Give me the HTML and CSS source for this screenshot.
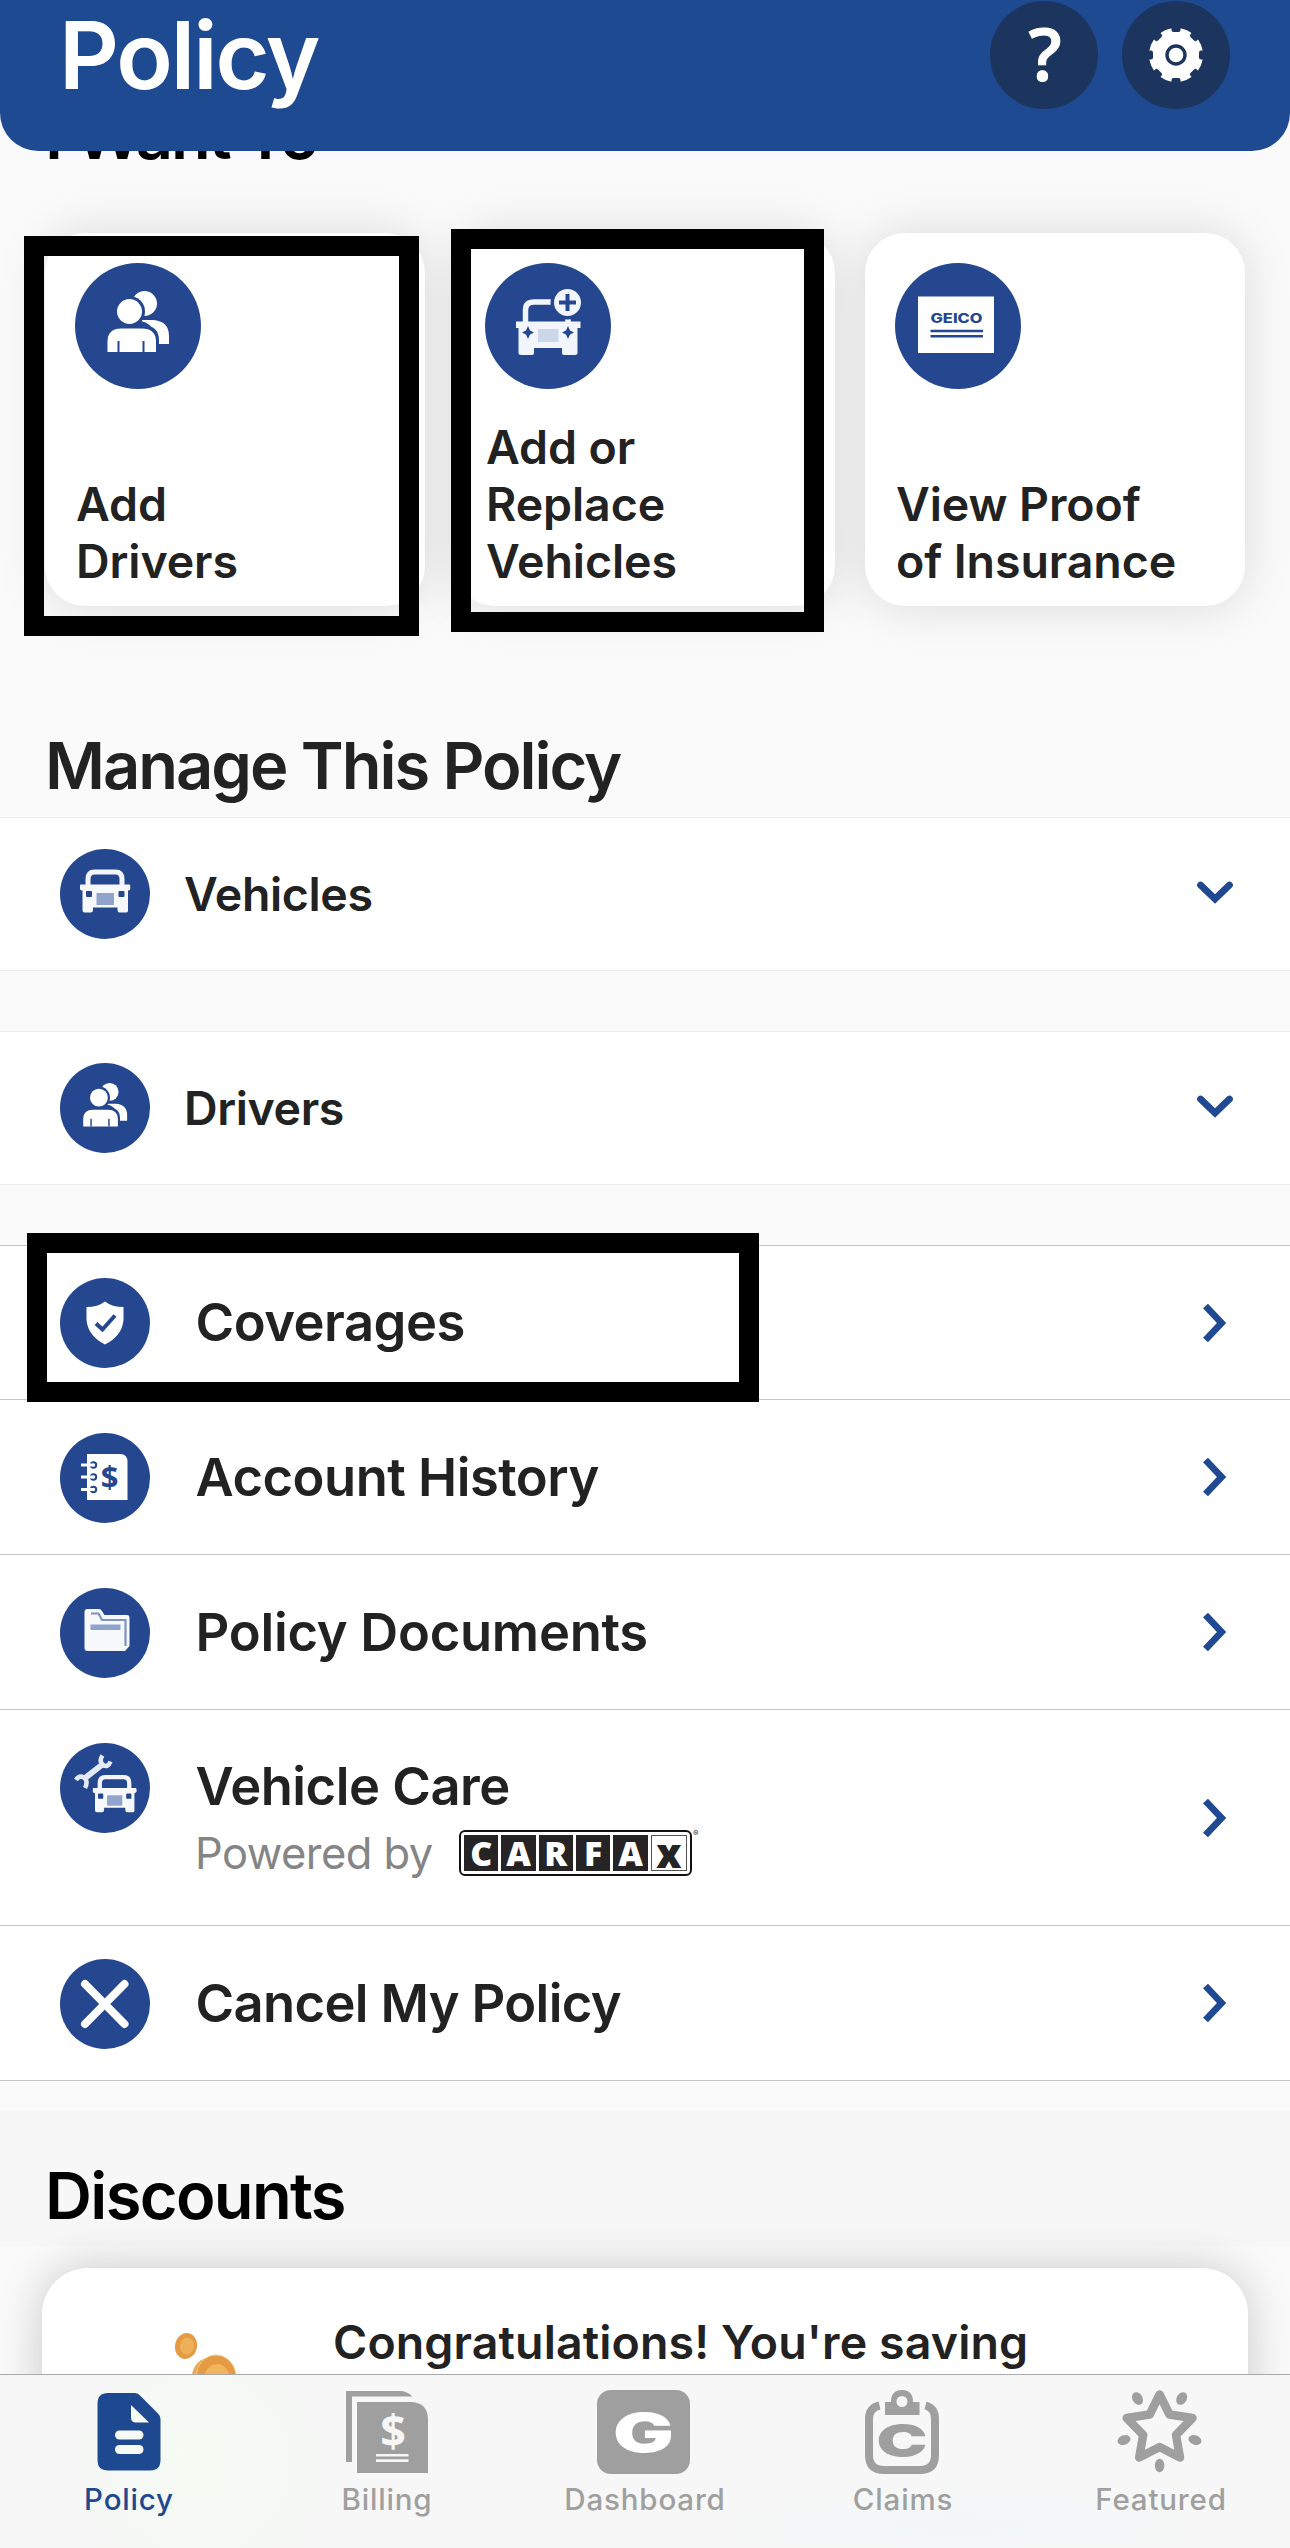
FILE: index.html
```html
<!DOCTYPE html>
<html lang="en">
<head>
<meta charset="utf-8">
<title>Policy</title>
<link rel="stylesheet" href="styles.css">
</head>
<body>
<svg class="defs" width="0" height="0" aria-hidden="true">
  <symbol id="people" viewBox="0 0 126 126">
    <circle cx="69.500" cy="40.500" r="12.500" fill="#fff"/>
    <path d="M66 57H78Q94 58 94 73V81H80V70Q76 60 66 58Z" fill="#fff"/>
    <circle cx="54.500" cy="48.500" r="15.500" fill="#25478f"/>
    <path d="M29 92V77Q30 62 46 62H66Q84 62 84 77V92Z" fill="#25478f"/>
    <circle cx="54.500" cy="48.500" r="12.500" fill="#fff"/>
    <path d="M32.500 89V78Q33 65.500 46 65.500H67Q80.500 65.500 81 78V89Z" fill="#fff"/>
    <path d="M43.500 78V89M68.500 78V89" stroke="#25478f" stroke-width="2"/>
  </symbol>
  <symbol id="car" viewBox="0 0 51 45">
    <path d="M8.500 18V10Q8.500 3 15 3H36Q42.500 3 42.500 10V18" fill="none" stroke="#f2f5fb" stroke-width="5"/>
    <path d="M1 15.500H50Q51 15.500 51 18V20Q50 21.500 48.500 21.500V42Q48.500 43.500 46 43.500H40Q38 43.500 38 41V38.500H13.500V41Q13.500 43.500 11 43.500H5Q3 43.500 3 41V21.500Q.5 21.500 .5 20V17Q.5 15.500 1 15.500Z" fill="#f6f8fc"/>
    <rect x="6.500" y="22" width="6" height="6" rx="1" fill="#25478f"/>
    <rect x="39" y="22" width="6" height="6" rx="1" fill="#25478f"/>
    <rect x="17" y="24" width="17.500" height="12" fill="#90a4cb"/>
  </symbol>
  <symbol id="down" viewBox="0 0 38 24"><path d="M4.500 4L19 18L33.500 4" fill="none" stroke="#1f4990" stroke-width="6.800" stroke-linecap="round"/></symbol>
  <symbol id="right" viewBox="0 0 24 40"><path d="M3.500 3L19.500 20L3.500 37" fill="none" stroke="#1f4990" stroke-width="6.800"/></symbol>
</svg>

<header class="header">
  <h1 class="title">Policy</h1>
  <div class="actions">
    <svg class="round" viewBox="0 0 108 108"><circle cx="54" cy="54" r="54" fill="#1c355e"/><text x="55" y="80" text-anchor="middle" class="question">?</text></svg>
    <svg class="round" viewBox="0 0 108 108">
      <circle cx="54" cy="54" r="54" fill="#1c355e"/>
      <circle cx="54" cy="54" r="27" fill="#fff"/>
      <g fill="#1c355e">
        <rect id="n" x="49.500" y="25" width="9" height="6" rx="2"/>
        <use href="#n" transform="rotate(45 54 54)"/><use href="#n" transform="rotate(90 54 54)"/><use href="#n" transform="rotate(135 54 54)"/><use href="#n" transform="rotate(180 54 54)"/><use href="#n" transform="rotate(225 54 54)"/><use href="#n" transform="rotate(270 54 54)"/><use href="#n" transform="rotate(315 54 54)"/>
      </g>
      <circle cx="54" cy="54" r="9" fill="#fff" stroke="#1c355e" stroke-width="3.400"/>
    </svg>
  </div>
</header>

<main class="main">
  <h2 class="heading want">I Want To</h2>
  <div class="cards">
    <article class="card">
      <svg class="disc-lg" viewBox="0 0 126 126"><circle cx="63" cy="63" r="63" fill="#25478f"/><use href="#people" width="126" height="126"/></svg>
      <p class="card-text">Add<br>Drivers</p>
    </article>
    <article class="card">
      <svg class="disc-lg" viewBox="0 0 126 126">
        <circle cx="63" cy="63" r="63" fill="#25478f"/>
        <path d="M40.500 61V47Q40.500 39 49 39H70M83 50V61" fill="none" stroke="#f2f5fb" stroke-width="5.500"/>
        <path d="M31 58.500H95.500V65H92.500V90Q92.500 92 90 92H79Q77 92 77 90V85H49V90Q49 92 47 92H36Q33.500 92 33.500 90V65H31Z" fill="#f2f5fb"/>
        <path d="M43 63L45 67.500L49 69.500L45 71.500L43 76L41 71.500L37 69.500L41 67.500ZM83 63L85 67.500L89 69.500L85 71.500L83 76L81 71.500L77 69.500L81 67.500Z" fill="#25478f"/>
        <rect x="53" y="66" width="20.500" height="13" fill="#ccd6e9"/>
        <circle cx="82.500" cy="39.500" r="17" fill="#25478f"/>
        <circle cx="82.500" cy="39.500" r="13.500" fill="#f2f5fb"/>
        <path d="M82.500 31V48M74 39.500H91" stroke="#25478f" stroke-width="4"/>
      </svg>
      <p class="card-text">Add or<br>Replace<br>Vehicles</p>
    </article>
    <article class="card">
      <svg class="disc-lg" viewBox="0 0 126 126">
        <circle cx="63" cy="63" r="63" fill="#25478f"/>
        <rect x="23" y="33.500" width="76" height="56.500" fill="#fff"/>
        <text x="35.500" y="59.500" textLength="52" lengthAdjust="spacingAndGlyphs" class="geico">GEICO</text>
        <path d="M35.500 68H88M35.500 73.300H88" stroke="#25478f" stroke-width="2.400"/>
      </svg>
      <p class="card-text">View Proof<br>of Insurance</p>
    </article>
  </div>

  <h2 class="heading manage">Manage This Policy</h2>
  <div class="panel">
    <svg class="disc" viewBox="0 0 90 90"><circle cx="45" cy="45" r="45" fill="#25478f"/><use href="#car" x="19.500" y="20" width="51" height="45"/></svg>
    <span class="panel-label">Vehicles</span>
    <svg class="down"><use href="#down"/></svg>
  </div>
  <div class="panel">
    <svg class="disc" viewBox="0 0 90 90"><circle cx="45" cy="45" r="45" fill="#25478f"/><use href="#people" width="90" height="90"/></svg>
    <span class="panel-label">Drivers</span>
    <svg class="down"><use href="#down"/></svg>
  </div>

  <ul class="list">
    <li class="row row-first">
      <svg class="disc" viewBox="0 0 90 90">
        <circle cx="45" cy="45" r="45" fill="#25478f"/>
        <path d="M45 23.500Q52 29 63.500 29V42Q62 58 45 66.500Q28 58 26.500 42V29Q38 29 45 23.500Z" fill="#fff"/>
        <path d="M36 45.500L42.500 51.500L55 37.500" fill="none" stroke="#25478f" stroke-width="4"/>
      </svg>
      <span class="row-label">Coverages</span><svg class="right"><use href="#right"/></svg>
    </li>
    <li class="row">
      <svg class="disc" viewBox="0 0 90 90">
        <circle cx="45" cy="45" r="45" fill="#25478f"/>
        <path d="M27 21H60Q67.500 21 67.500 29V67H27Z" fill="#fff"/>
        <g fill="none" stroke="#25478f" stroke-width="2"><circle cx="33.500" cy="32" r="2.700"/><circle cx="33.500" cy="44" r="2.700"/><circle cx="33.500" cy="56.500" r="2.700"/></g>
        <path d="M21 32H33M21 44H33M21 56.500H33" stroke="#fff" stroke-width="3"/>
        <text x="49.500" y="55" text-anchor="middle" class="dollar">$</text>
      </svg>
      <span class="row-label">Account History</span><svg class="right"><use href="#right"/></svg>
    </li>
    <li class="row">
      <svg class="disc" viewBox="0 0 90 90">
        <circle cx="45" cy="45" r="45" fill="#25478f"/>
        <path d="M24.500 24Q24.500 21 27.500 21H39Q41 21 42 23L44.500 27H67Q69.500 27 69.500 30V58L65 63H27.500Q24.500 63 24.500 60Z" fill="#f6f8fc"/>
        <path d="M31 25.500H38.500L42 32H65.500V58" fill="none" stroke="#7d93c0" stroke-width="2.200"/>
        <rect x="30.500" y="36.500" width="30" height="5.500" fill="#90a4cb"/>
      </svg>
      <span class="row-label docs">Policy Documents</span><svg class="right"><use href="#right"/></svg>
    </li>
    <li class="row row-care">
      <svg class="disc" viewBox="0 0 90 90">
        <circle cx="45" cy="45" r="45" fill="#25478f"/>
        <path d="M25 35L43 21" stroke="#e4eaf5" stroke-width="6"/>
        <path d="M42.500 12.500Q38.500 18 43 22Q48 25 50.500 18.500M16 37Q19 32 24 34.500Q28.500 38 25 45" fill="none" stroke="#e4eaf5" stroke-width="4.500"/>
        <use href="#car" x="31.500" y="31.500" width="46" height="39"/>
      </svg>
      <div class="care">
        <span class="row-label">Vehicle Care</span>
        <div class="powered">
          <span class="powered-text">Powered by</span>
          <span class="carfax"><i>C</i><i>A</i><i>R</i><i>F</i><i>A</i><i class="x">x</i></span><sup class="reg">®</sup>
        </div>
      </div>
      <svg class="right"><use href="#right"/></svg>
    </li>
    <li class="row">
      <svg class="disc" viewBox="0 0 90 90">
        <circle cx="45" cy="45" r="45" fill="#25478f"/>
        <path d="M25 25L64.500 65M64.500 25L25 65" stroke="#fff" stroke-width="8" stroke-linecap="round"/>
      </svg>
      <span class="row-label cancel">Cancel My Policy</span><svg class="right"><use href="#right"/></svg>
    </li>
  </ul>

  <section class="discounts">
    <h2 class="heading discount-title">Discounts</h2>
  </section>
  <div class="saving">
    <svg class="coins" viewBox="170 2325 70 60">
      <ellipse cx="186" cy="2346" rx="11" ry="13" fill="#e59a45" transform="rotate(12 186 2346)"/>
      <ellipse cx="187" cy="2346" rx="7" ry="8.500" fill="#efb05a" transform="rotate(12 187 2346)"/>
      <ellipse cx="212" cy="2377" rx="20" ry="20" fill="#e9a850"/>
      <ellipse cx="216" cy="2377" rx="20" ry="22" fill="#e59a45" stroke="#f6cf8d" stroke-width="1"/>
      <ellipse cx="217" cy="2379" rx="13" ry="15" fill="#f0b45c"/>
    </svg>
    <p class="saving-text">Congratulations! You're saving</p>
  </div>
</main>

<nav class="tabs">
  <a class="tab active">
    <svg class="tab-icon" viewBox="79 2387 100 90">
      <path d="M108 2393H135Q138 2393 140.500 2396L158 2413.500Q160.500 2416 160.500 2419V2460Q160.500 2470.500 150 2470.500H108Q97.500 2470.500 97.500 2460V2403.500Q97.500 2393 108 2393Z" fill="#1e4991"/>
      <path d="M131 2405L149 2422.500H136Q131 2422.500 131 2417.500Z" fill="#f7fbf5"/>
      <rect x="115" y="2430.500" width="28.500" height="9" rx="4.500" fill="#f7fbf5"/><rect x="115" y="2445" width="28.500" height="9" rx="4.500" fill="#f7fbf5"/>
    </svg>Policy
  </a>
  <a class="tab">
    <svg class="tab-icon" viewBox="337 2387 100 90">
      <path d="M346 2391H400Q407 2391 412.500 2396.500H352V2462H346Z" fill="#9f9f9f"/>
      <path d="M357 2402H410Q428 2402 428 2420V2473H357Z" fill="#9f9f9f"/>
      <text x="393" y="2447" text-anchor="middle" class="bill">$</text>
      <path d="M376 2455.300H408.500M376 2460.600H408.500" stroke="#f6f6f6" stroke-width="2.600"/>
    </svg>Billing
  </a>
  <a class="tab">
    <svg class="tab-icon" viewBox="595 2387 100 90">
      <rect x="597" y="2390" width="93" height="84" rx="14" fill="#9f9f9f"/>
      <text x="613" y="2452" textLength="61" lengthAdjust="spacingAndGlyphs" class="gee">G</text>
    </svg>Dashboard
  </a>
  <a class="tab">
    <svg class="tab-icon" viewBox="853 2387 100 90">
      <path d="M879.500 2405.500Q869 2408 869 2419V2455Q869 2470 884 2470H920Q935 2470 935 2455V2419Q935 2408 925.500 2405.500" fill="none" stroke="#9f9f9f" stroke-width="8"/>
      <path d="M885 2402H891Q891 2390 902 2390Q913 2390 913 2402H919.500V2415H885Z" fill="#9f9f9f"/>
      <ellipse cx="902" cy="2401.500" rx="5.500" ry="5.500" fill="#f6f6f6"/>
      <text x="876.500" y="2457" textLength="51" lengthAdjust="spacingAndGlyphs" class="cee">C</text>
    </svg>Claims
  </a>
  <a class="tab">
    <svg class="tab-icon" viewBox="1111 2387 100 90">
      <path d="M1159.600 2394.500L1169.500 2414.500L1192.500 2418L1176 2435L1180 2457.500L1159.600 2447L1139.200 2457.500L1143.200 2435L1126.700 2418L1149.700 2414.500Z" fill="none" stroke="#9f9f9f" stroke-width="8.500" stroke-linejoin="round"/>
      <g fill="#9f9f9f">
        <ellipse cx="1137.500" cy="2398.500" rx="5" ry="6.700" transform="rotate(-32 1137.500 2398.500)"/>
        <ellipse cx="1181.700" cy="2398.500" rx="5" ry="6.700" transform="rotate(32 1181.700 2398.500)"/>
        <ellipse cx="1124" cy="2440" rx="6.700" ry="4.800" transform="rotate(-20 1124 2440)"/>
        <ellipse cx="1195" cy="2440" rx="6.700" ry="4.800" transform="rotate(20 1195 2440)"/>
        <ellipse cx="1159.600" cy="2465.500" rx="4.800" ry="6.700"/>
      </g>
    </svg>Featured
  </a>
</nav>

<div class="mark mark-drivers"></div>
<div class="mark mark-vehicles"></div>
<div class="mark mark-coverages"></div>
</body>
</html>
```
FILE: styles.css
```css
* { box-sizing: border-box; margin: 0; padding: 0; }

body {
  position: relative;
  display: flex;
  flex-direction: column;
  width: 1290px;
  height: 2548px;
  overflow: hidden;
  background: #fafafa;
  color: #222;
  font-family: Inter, "Liberation Sans", sans-serif;
}

svg { display: block; flex: none; }
.defs { position: absolute; }

/* Header */
.header {
  display: flex;
  justify-content: space-between;
  flex: none;
  height: 151px;
  padding: 1px 60px 0 59px;
  border-radius: 0 0 38px 38px;
  background: #1e4a92;
}
.title {
  color: #fff;
  font-size: 93px;
  font-weight: 600;
  line-height: 108px;
  letter-spacing: -0.022em;
}
.actions { display: flex; gap: 24px; }
.round { width: 108px; height: 108px; }
.question { font: 600 73px "Open Sans", sans-serif; fill: #fff; stroke: #fff; stroke-width: 1px; }

/* Scrolled content, cut off by the header and the tab bar */
.main { flex: 1; min-height: 0; overflow: hidden; }
.heading {
  padding-left: 45px;
  font-size: 65px;
  font-weight: 600;
  line-height: 70px;
}
.want { margin-top: -50px; color: #000; letter-spacing: -0.032em; }
.manage { margin: 125px 0 16px; letter-spacing: -0.031em; }

.cards { display: flex; gap: 30px; padding: 62px 45px 0; }
.card {
  display: flex;
  flex-direction: column;
  justify-content: space-between;
  width: 380px;
  height: 373px;
  padding: 30px 0 16px 30px;
  border-radius: 40px;
  background: #fff;
  box-shadow: 0 0 50px rgba(0, 0, 0, 0.13);
}
.disc-lg { width: 126px; height: 126px; }
.card-text {
  padding-left: 1px;
  font-size: 46.5px;
  font-weight: 600;
  line-height: 57px;
  letter-spacing: -0.002em;
}
.geico { font: 800 13px Inter, sans-serif; fill: #25478f; }

.panel {
  display: flex;
  align-items: center;
  height: 154px;
  margin-bottom: 60px;
  padding: 0 56px 0 60px;
  border: solid #ebebeb;
  border-width: 1px 0;
  background: #fff;
}
.disc { width: 90px; height: 90px; }
.panel-label {
  flex: 1;
  padding: 0 0 1px 34px;
  font-size: 46.5px;
  font-weight: 600;
  line-height: 56px;
  letter-spacing: -0.008em;
}
.down { width: 38px; height: 24px; margin-top: -2px; }

.list { list-style: none; border-bottom: 1px solid #c4c4c6; }
.row {
  display: flex;
  align-items: center;
  height: 155px;
  padding: 0 64px 0 60px;
  border-top: 1px solid #c4c4c6;
  background: #fff;
}
.row .disc { margin-top: 2px; }
.row-first { height: 154px; }
.row-first .disc { margin-top: 0; }
.row-label {
  flex: 1;
  padding: 0 0 1px 45.5px;
  font-size: 52.5px;
  font-weight: 600;
  line-height: 64px;
  letter-spacing: -0.0095em;
}
.docs { letter-spacing: -0.005em; }
.cancel { letter-spacing: -0.0125em; }
.right { width: 24px; height: 40px; }
.row-care { height: 216px; }
.row-care .disc { align-self: flex-start; margin-top: 33px; }
.care { display: flex; flex: 1; flex-direction: column; gap: 5px; }
.powered { display: flex; align-items: center; height: 58px; padding-left: 45px; }
.powered-text {
  width: 264px;
  color: #858585;
  font-size: 43.5px;
  letter-spacing: -0.0125em;
  white-space: nowrap;
}
.carfax {
  display: flex;
  gap: 3px;
  width: 233px;
  height: 46px;
  padding: 3px;
  border: 2px solid #111;
  border-radius: 6px;
  background: #fff;
}
.carfax i {
  flex: 1;
  background: #252324;
  color: #fff;
  font: 800 34px/36px "Open Sans", sans-serif;
  text-align: center;
}
.carfax .x {
  padding-top: 1px;
  border: 1px solid #555;
  background: #fff;
  color: #252324;
  font-size: 40px;
  line-height: 32px;
}
.reg { align-self: flex-start; margin: 5px 0 0 1px; font-size: 8px; line-height: 8px; }

/* Discounts */
.discounts {
  height: 135px;
  margin-top: 30px;
  padding-top: 50px;
  background: #f7f7f7;
}
.discount-title { color: #000; letter-spacing: -0.0255em; }
.saving {
  display: flex;
  width: 1206px;
  height: 240px;
  margin: 22px 0 0 42px;
  padding-top: 57px;
  border-radius: 46px;
  background: #fff;
  box-shadow: 0 0 48px rgba(0, 0, 0, 0.2);
}
.coins { width: 70px; height: 60px; margin-left: 128px; }
.saving-text {
  margin: -11px 0 0 93px;
  font-size: 46.5px;
  font-weight: 600;
  line-height: 56px;
  letter-spacing: 0.0025em;
}

/* Tab bar */
.tabs {
  display: grid;
  flex: none;
  grid-template-columns: repeat(5, 1fr);
  height: 174px;
  border-top: 1px solid #a9a9a9;
  background:
    radial-gradient(circle at 200px 90px, #f5fbf3 0, rgba(245, 251, 243, 0) 150px),
    radial-gradient(ellipse at 960px 150px, #f2f6f8 0, rgba(242, 246, 248, 0) 240px),
    #f7f7f7;
}
.tab {
  display: flex;
  flex-direction: column;
  align-items: center;
  padding-top: 12px;
  color: #9f9f9f;
  font-size: 29.5px;
  font-weight: 500;
  line-height: 44px;
  letter-spacing: 0.028em;
}
.tab.active { color: #1e4991; }
.tab-icon { width: 100px; height: 90px; }
.bill { font: 700 45px "Open Sans", sans-serif; letter-spacing: 0; fill: #f6f6f6; }
.dollar { font: 700 31px "Open Sans", sans-serif; letter-spacing: 0; fill: #25478f; }
.gee { font: 900 54px Inter, sans-serif; letter-spacing: 0; fill: #fff; }
.cee { font: 900 46px Inter, sans-serif; letter-spacing: 0; fill: #9f9f9f; }

/* Highlight frames drawn over the content */
.mark { position: absolute; border: 20px solid #000; }
.mark-drivers { left: 24px; top: 236px; width: 395px; height: 400px; }
.mark-vehicles { left: 451px; top: 229px; width: 373px; height: 403px; }
.mark-coverages { left: 27px; top: 1233px; width: 732px; height: 169px; }
```
